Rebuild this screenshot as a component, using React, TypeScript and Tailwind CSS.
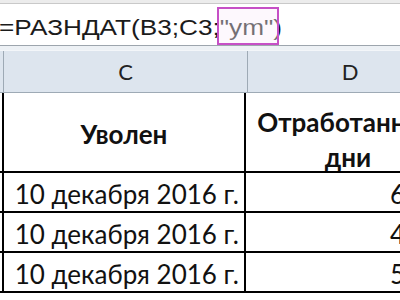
import React from "react";

const tableFont = { fontFamily: "Lato, 'Open Sans', 'Noto Sans', sans-serif" };

export default function App() {
  const rows = ["6", "4", "5"];
  return (
    <div className="w-[400px] h-[300px] overflow-hidden bg-white relative">
      {/* top strip */}
      <div className="h-[4px] bg-[#ececec] border-b border-[#c9c9c9]" />
      {/* formula bar */}
      <div className="h-[42px] bg-white border-b border-[#9da5ad] relative">
        <div
          className="pt-[6px] leading-[36px] text-[22px] text-[#1b1b1b] whitespace-nowrap"
          style={{ fontFamily: "'Liberation Sans', Arial, sans-serif" }}
        >
          <span className="inline-block origin-left scale-x-[1.19] ml-[-1px]">=РАЗНДАТ(B3;C3;"ym")</span>
        </div>
        <div className="absolute left-[217px] top-[3px] w-[62px] h-[38px] border-2 border-[#c64fc6] bg-[#fbeefb]/40" />
      </div>
      {/* gap */}
      <div className="h-[4px] bg-[#edf1f5]" />
      {/* column header */}
      <div
        className="h-[43px] flex bg-[#dde5ee] border-t border-[#f3f6f9] border-b border-b-[#9eaab5] text-[22px] text-[#222]"
        style={tableFont}
      >
        <div className="w-[4px] border-r border-[#9eaab5] shrink-0" />
        <div className="w-[244px] border-r border-[#9eaab5] shrink-0 flex items-center justify-center">C</div>
        <div className="w-[204px] shrink-0 flex items-center justify-center">D</div>
      </div>
      {/* data */}
      <div style={tableFont} className="text-[#111]">
        <div className="h-[80px] flex border-b-2 border-black">
          <div className="w-[4px] border-r-2 border-black shrink-0" />
          <div className="w-[242px] border-r-2 border-black shrink-0 flex items-center justify-center pt-[4px] font-bold text-[26px]">
            Уволен
          </div>
          <div className="w-[204px] shrink-0 flex flex-col items-center pt-[12px] font-bold text-[26px] leading-[35px] whitespace-nowrap">
            <span>Отработанные</span>
            <span>дни</span>
          </div>
        </div>
        {rows.map((n, i) => (
          <div key={i} className="h-[40px] flex border-b-2 border-black">
            <div className="w-[4px] border-r-2 border-black shrink-0" />
            <div className="w-[242px] border-r-2 border-black shrink-0 flex items-center justify-end pr-[5px] pt-[4px] text-[26px] whitespace-nowrap">
              10 декабря 2016 г.
            </div>
            <div className="w-[204px] shrink-0 flex items-center pl-[144px] pt-[4px] text-[26px]">{n}</div>
          </div>
        ))}
      </div>
    </div>
  );
}
